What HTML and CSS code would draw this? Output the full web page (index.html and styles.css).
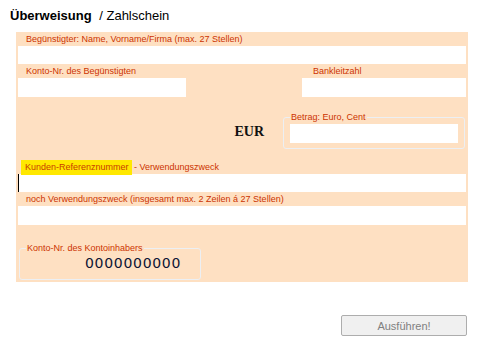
FILE: index.html
```html
<!DOCTYPE html>
<html lang="de">
<head>
    <meta charset="UTF-8">
    <title>Überweisung / Zahlschein</title>
    <link rel="stylesheet" href="styles.css">
</head>
<body>
<div class="title"><b class="title-main">Überweisung</b> / Zahlschein</div>

<form class="slip">
    <div class="label">Begünstigter: Name, Vorname/Firma (max. 27 Stellen)</div>
    <input class="field full" type="text">

    <div class="row">
        <div class="label col-left">Konto-Nr. des Begünstigten</div>
        <div class="label col-right">Bankleitzahl</div>
    </div>
    <div class="row">
        <input class="field tall col-left" type="text">
        <input class="field tall col-right" type="text">
    </div>

    <div class="amount-row">
        <div class="currency">EUR</div>
        <fieldset class="box amount">
            <legend>Betrag: Euro, Cent</legend>
            <input class="field tall amount-input" type="text">
        </fieldset>
    </div>

    <div class="label ref-label"><span class="mark">Kunden-Referenznummer</span> - Verwendungszweck</div>
    <input class="field full focus" type="text">

    <div class="label">noch Verwendungszweck (insgesamt max. 2 Zeilen á 27 Stellen)</div>
    <input class="field tall full" type="text">

    <fieldset class="box owner">
        <legend>Konto-Nr. des Kontoinhabers</legend>
        <div class="account">0000000000</div>
    </fieldset>
</form>

<div class="actions">
    <button class="submit" type="button" disabled>Ausführen!</button>
</div>
</body>
</html>
```

FILE: styles.css
```css
body {
    margin: 0;
    font-family: "Liberation Sans", Arial, sans-serif;
    background: #fff;
}

.title {
    padding: 8px 10px;
    font-size: 13px;
    line-height: 16px;
    color: #000;
}

.title-main {
    margin-right: 4px;
}

.slip {
    width: 448px;
    margin: 0 0 0 16px;
    padding: 0 2px 2px 2px;
    background: #fee0c2;
}

.label {
    height: 14px;
    padding-left: 8px;
    font-size: 9px;
    line-height: 14px;
    color: #cc3300;
    white-space: nowrap;
}

.field {
    display: block;
    box-sizing: border-box;
    height: 18px;
    margin: 0;
    padding: 0 3px;
    border: 0;
    background: #fff;
    outline: none;
}

.field.tall {
    height: 19px;
}

.full {
    width: 448px;
}

.focus {
    border-left: 1px solid #000;
}

.row {
    display: flex;
    justify-content: space-between;
}

.col-left {
    width: 168px;
    box-sizing: border-box;
}

.col-right {
    width: 164px;
    box-sizing: border-box;
}

.label.col-right {
    padding-left: 11px;
}

.amount-row {
    display: flex;
    justify-content: flex-end;
    margin-top: 14px;
    margin-bottom: 11px;
}

.currency {
    margin: 12px 19px 0 0;
    font-family: "Liberation Serif", "Times New Roman", serif;
    font-weight: bold;
    font-size: 14px;
    line-height: 18px;
    color: #111;
}

.box {
    box-sizing: border-box;
    width: 182px;
    margin: 0;
    border: 1px solid #eceff3;
    border-radius: 3px;
}

.box legend {
    padding: 0 1px;
    font-size: 9px;
    line-height: 12px;
    color: #cc3300;
}

.amount {
    margin-right: 1px;
    padding: 1px 6px 5px 6px;
}

.amount-input {
    width: 168px;
}

.ref-label {
    padding-left: 3px;
}

.mark {
    display: inline-block;
    height: 15px;
    padding: 0 3px 0 4px;
    background: #ffe800;
    color: #c83c00;
}

.owner {
    margin: 17px 0 0 1px;
    padding: 1px 6px 8px 6px;
}

.account {
    padding-left: 59px;
    font-family: "DejaVu Sans", Verdana, sans-serif;
    font-size: 14px;
    line-height: 16px;
    letter-spacing: 0.7px;
    color: #0c1434;
}

.actions {
    display: flex;
    justify-content: flex-end;
    padding: 33px 17px 0 0;
}

.submit {
    width: 126px;
    height: 21px;
    padding: 0;
    border: 1px solid #adadad;
    border-radius: 2px;
    background: #f0f0f0;
    font-family: "Liberation Sans", Arial, sans-serif;
    font-size: 11px;
    color: #808080;
}
```
